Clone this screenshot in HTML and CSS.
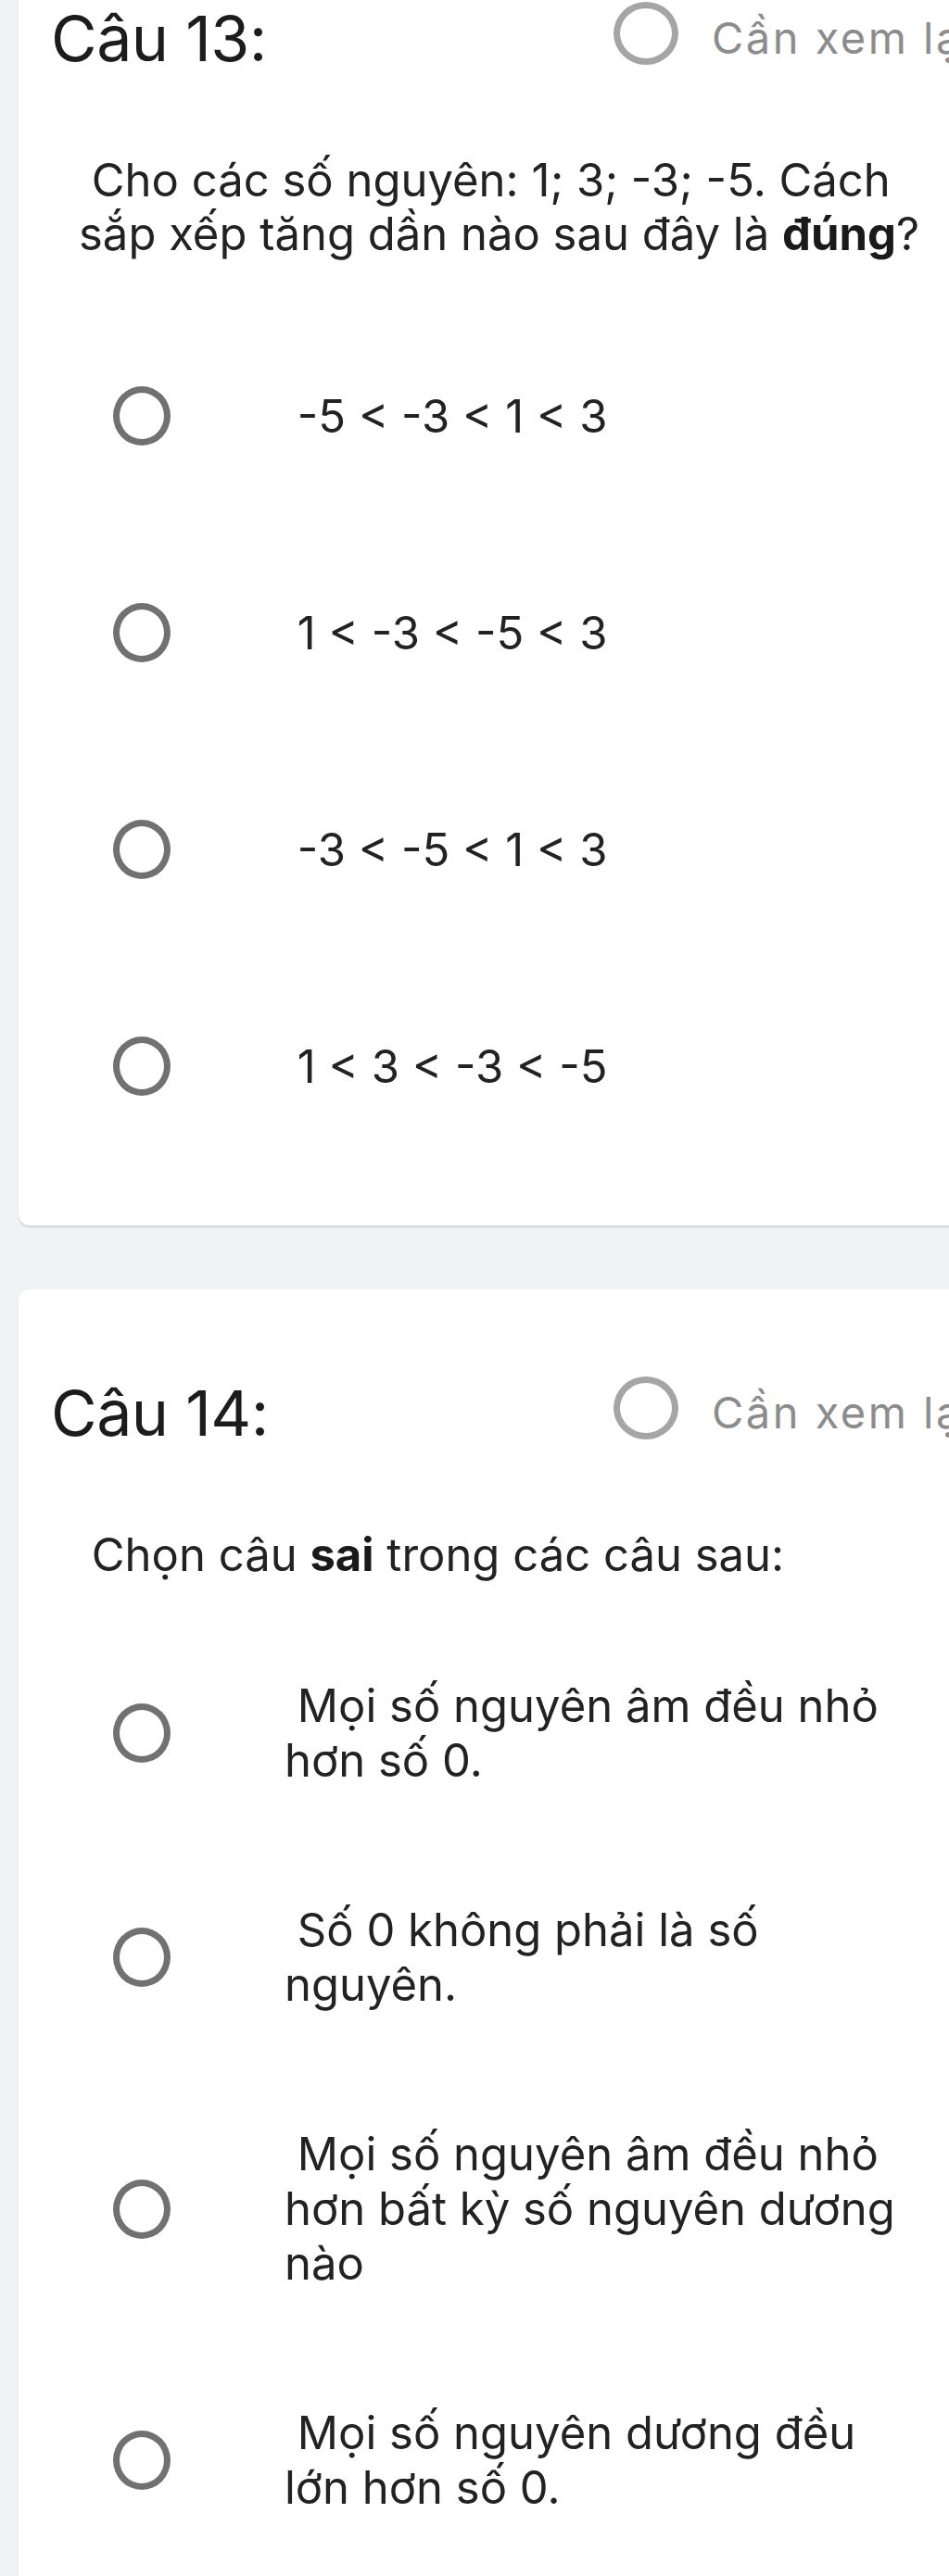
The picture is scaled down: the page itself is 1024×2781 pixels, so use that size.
FILE: index.html
```html
<!DOCTYPE html>
<html lang="vi">
<head>
<meta charset="utf-8">
<title>Câu hỏi</title>
<link rel="stylesheet" href="styles.css">
</head>
<body>
<main class="page">
  <section class="card">
    <header class="card-head">
      <h2 class="q-title">Câu 13:</h2>
      <label class="review"><span class="review-radio"></span><span class="review-label">Cần xem lại</span></label>
    </header>
    <p class="q-text"> Cho các số nguyên: 1; 3; -3; -5. Cách sắp xếp tăng dần nào sau đây là <b>đúng</b>?</p>
    <ul class="options options--math">
      <li class="opt"><span class="opt-radio"></span><span class="opt-text"> -5 &lt; -3 &lt; 1 &lt; 3</span></li>
      <li class="opt"><span class="opt-radio"></span><span class="opt-text"> 1 &lt; -3 &lt; -5 &lt; 3</span></li>
      <li class="opt"><span class="opt-radio"></span><span class="opt-text"> -3 &lt; -5 &lt; 1 &lt; 3</span></li>
      <li class="opt"><span class="opt-radio"></span><span class="opt-text"> 1 &lt; 3 &lt; -3 &lt; -5</span></li>
    </ul>
  </section>

  <section class="card">
    <header class="card-head">
      <h2 class="q-title">Câu 14:</h2>
      <label class="review"><span class="review-radio"></span><span class="review-label">Cần xem lại</span></label>
    </header>
    <p class="q-text"> Chọn câu <b>sai</b> trong các câu sau:</p>
    <ul class="options">
      <li class="opt"><span class="opt-radio"></span><span class="opt-text"> Mọi số nguyên âm đều nhỏ hơn số 0.</span></li>
      <li class="opt"><span class="opt-radio"></span><span class="opt-text"> Số 0 không phải là số nguyên.</span></li>
      <li class="opt"><span class="opt-radio"></span><span class="opt-text"> Mọi số nguyên âm đều nhỏ hơn bất kỳ số nguyên dương nào</span></li>
      <li class="opt"><span class="opt-radio"></span><span class="opt-text"> Mọi số nguyên dương đều lớn hơn số 0.</span></li>
    </ul>
  </section>
</main>
</body>
</html>
```

FILE: styles.css
```css
html, body {
  margin: 0;
  padding: 0;
}

body {
  background: #f1f2f4;
  overflow: hidden;
  font-family: Inter, "Noto Sans", "Liberation Sans", sans-serif;
  color: #222222;
}

.page {
  margin-top: -92px;
  padding-left: 20px;
  width: 1070px;
}

.card {
  background: #ffffff;
  border-radius: 12px;
  box-shadow: 0 2px 2px rgba(0, 0, 0, 0.14);
  padding: 92px 0 55px 0;
  margin-bottom: 69px;
}

.card-head {
  display: flex;
  align-items: center;
  height: 82px;
  padding-left: 35px;
}

.q-title {
  margin: 0;
  width: 607px;
  font-size: 68px;
  font-weight: 400;
  line-height: 82px;
  color: #1c1c1c;
  letter-spacing: -0.5px;
}

.review {
  display: flex;
  align-items: center;
  gap: 36px;
}

.review-radio {
  box-sizing: border-box;
  width: 70px;
  height: 68px;
  border: 7px solid #a5a5a5;
  border-radius: 50%;
  margin-bottom: 10px;
  flex: none;
}

.review-label {
  font-size: 47px;
  line-height: 60px;
  color: #8c8c8c;
  letter-spacing: 2.5px;
  white-space: nowrap;
}

.q-text {
  margin: 84px 0 0 0;
  padding-left: 65px;
  width: 945px;
  font-size: 49px;
  line-height: 58px;
  white-space: pre-wrap;
}

.q-text b {
  font-weight: 700;
  color: #1a1a1a;
}

.options {
  list-style: none;
  margin: 42px 0 0 0;
  padding: 0;
}

.options--math {
  margin-top: 50px;
}

.opt {
  display: flex;
  align-items: center;
  padding: 62px 0;
}

.options--math .opt {
  padding: 85px 0;
}

.opt-radio {
  box-sizing: border-box;
  flex: none;
  width: 62px;
  height: 64px;
  margin-left: 102px;
  border: 7px solid #717171;
  border-radius: 50%;
}

.opt-text {
  margin-left: 123px;
  width: 670px;
  font-size: 49px;
  line-height: 59px;
  white-space: pre-wrap;
}
```
